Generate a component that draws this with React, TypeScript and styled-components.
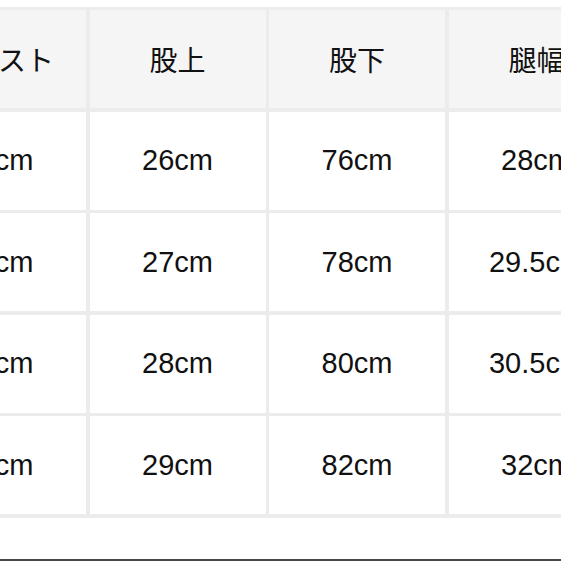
import React from "react";
import styled, { createGlobalStyle } from "styled-components";

const Global = createGlobalStyle`
  html, body { margin: 0; padding: 0; background: #fff; }
  body { width: 561px; height: 561px; overflow: hidden; }
  #root { width: 561px; height: 561px; }
`;

const Page = styled.div`
  width: 561px;
  height: 561px;
  overflow: hidden;
  display: flex;
  flex-direction: column;
  background: #fff;
  box-sizing: border-box;
  border-bottom: 2px solid #474747;
`;

const Table = styled.div`
  margin-top: 6.5px;
  margin-left: -93.5px;
  width: max-content;
  display: grid;
  grid-template-columns: repeat(4, 176px);
  grid-auto-rows: 98px;
  gap: 3.5px;
  padding: 3.5px;
  background: #ececec;
`;

const Cell = styled.div<{ $head?: boolean }>`
  display: flex;
  align-items: center;
  justify-content: center;
  background: ${(p) => (p.$head ? "#f5f5f5" : "#ffffff")};
  color: #111;
  font-family: "Liberation Sans", "Noto Sans CJK JP", sans-serif;
  font-size: ${(p) => (p.$head ? "28px" : "29px")};
  white-space: nowrap;
`;

const headers = ["ウエスト", "股上", "股下", "腿幅"];
const rows = [
  ["66cm", "26cm", "76cm", "28cm"],
  ["70cm", "27cm", "78cm", "29.5cm"],
  ["74cm", "28cm", "80cm", "30.5cm"],
  ["78cm", "29cm", "82cm", "32cm"],
];

export default function App() {
  return (
    <>
      <Global />
      <Page>
        <Table>
          {headers.map((h) => (
            <Cell key={h} $head>
              {h}
            </Cell>
          ))}
          {rows.map((r, i) =>
            r.map((v, j) => <Cell key={`${i}-${j}`}>{v}</Cell>)
          )}
        </Table>
      </Page>
    </>
  );
}
